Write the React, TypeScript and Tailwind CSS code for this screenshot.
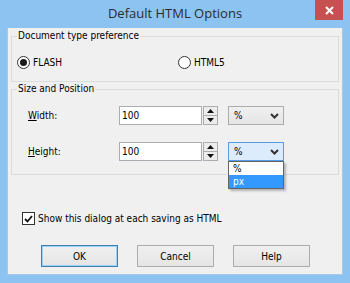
import React from "react";

const font = { fontFamily: '"DejaVu Sans Condensed", "Liberation Sans", Arial, sans-serif' };

function Radio({ checked, label }: { checked?: boolean; label: string }) {
  return (
    <div className="flex items-center gap-[3px]">
      <div className="w-[13px] h-[13px] rounded-full border border-[#333] bg-white flex items-center justify-center">
        {checked && <div className="w-[7px] h-[7px] rounded-full bg-[#1a1a1a]" />}
      </div>
      <span>{label}</span>
    </div>
  );
}

function Chevron() {
  return (
    <svg width="9" height="6" viewBox="0 0 9 6">
      <path d="M1 1 L4.5 4.5 L8 1" stroke="#333" strokeWidth="2" fill="none" />
    </svg>
  );
}

function Spin() {
  return (
    <div className="flex flex-col w-[15px] h-[19px] ml-[1px]">
      <div className="flex-1 border border-[#adadad] bg-[#ececec] flex items-center justify-center">
        <svg width="7" height="4" viewBox="0 0 7 4"><path d="M0 4 L3.5 0 L7 4 Z" fill="#111" /></svg>
      </div>
      <div className="flex-1 border border-t-0 border-[#adadad] bg-[#ececec] flex items-center justify-center">
        <svg width="7" height="4" viewBox="0 0 7 4"><path d="M0 0 L3.5 4 L7 0 Z" fill="#111" /></svg>
      </div>
    </div>
  );
}

function Combo({ focused }: { focused?: boolean }) {
  return (
    <div
      className={
        "w-[56px] h-[19px] border flex items-center justify-between pl-[5px] pr-[4px] " +
        (focused ? "border-[#569de5] bg-[#dcecfc]" : "border-[#acacac] bg-gradient-to-b from-[#f0f0f0] to-[#e5e5e5]")
      }
    >
      <span>%</span>
      <Chevron />
    </div>
  );
}

function Row({ u, rest, focused, dropdown }: { u: string; rest: string; focused?: boolean; dropdown?: boolean }) {
  return (
    <div className="flex items-center h-[19px]">
      <div className="w-[107px] pl-[16px]">
        <span className="underline">{u}</span>
        {rest}
      </div>
      <div className="w-[83px] h-[19px] border border-[#abadb3] bg-white flex items-center pl-[2px]">100</div>
      <Spin />
      <div className="ml-[10px] relative">
        <Combo focused={focused} />
        {dropdown && (
          <div className="absolute left-0 top-[19px] w-[56px] border border-[#646464] bg-white shadow-[2px_2px_2px_rgba(0,0,0,0.25)] flex flex-col">
            <div className="h-[13px] pl-[4px] leading-[13px]">%</div>
            <div className="h-[13px] pl-[4px] leading-[13px] bg-[#3399ff] text-white">px</div>
          </div>
        )}
      </div>
    </div>
  );
}

function Group({ title, className, children }: { title: string; className?: string; children: React.ReactNode }) {
  return (
    <div className={"relative mx-[3px] border border-[#dcdcdc] " + (className || "")}>
      <div className="absolute -top-[8px] left-[5px] px-[1px] bg-[#f0f0f0] leading-[14px]">{title}</div>
      {children}
    </div>
  );
}

function Button({ label, def }: { label: string; def?: boolean }) {
  return (
    <div
      className={
        "w-[77px] h-[22px] flex items-center justify-center border bg-gradient-to-b from-[#f0f0f0] to-[#e5e5e5] " +
        (def ? "border-[#3c7fb1] shadow-[inset_0_0_0_1px_#9fd0f7]" : "border-[#acacac]")
      }
    >
      {label}
    </div>
  );
}

export default function App() {
  return (
    <div className="w-[350px] h-[283px] bg-[#8cc3f1] flex flex-col px-[7px] pb-[8px] text-[10px] text-black" style={font}>
      <div className="h-[28px] relative flex items-center justify-center">
        <span className="text-[13px] text-[#2b2b2b] -mt-[1px]" style={{ fontFamily: '"Open Sans", "Noto Sans", sans-serif' }}>
          Default HTML Options
        </span>
        <div className="absolute right-0 top-0 w-[28px] h-[20px] bg-[#c75050] flex items-center justify-center">
          <svg width="9" height="9" viewBox="0 0 9 9">
            <path d="M1 1 L8 8 M8 1 L1 8" stroke="white" strokeWidth="2" />
          </svg>
        </div>
      </div>
      <div className="flex-1 bg-[#f0f0f0] border border-[#a9c8e4] border-t-0 flex flex-col">
        <Group title="Document type preference" className="mt-[8px] h-[46px]">
          <div className="flex items-center pt-[18px] pl-[5px]">
            <div className="w-[161px]">
              <Radio checked label="FLASH" />
            </div>
            <Radio label="HTML5" />
          </div>
        </Group>
        <Group title="Size and Position" className="mt-[7px] h-[86px]">
          <div className="flex flex-col pt-[16px] gap-[17px]">
            <Row u="W" rest="idth:" />
            <Row u="H" rest="eight:" focused dropdown />
          </div>
        </Group>
        <div className="flex items-center gap-[3px] mt-[36px] pl-[14px]">
          <div className="w-[13px] h-[13px] border border-[#333] bg-white flex items-center justify-center">
            <svg width="9" height="8" viewBox="0 0 9 8">
              <path d="M1 4 L3.5 6.5 L8 1" stroke="#111" strokeWidth="1.8" fill="none" />
            </svg>
          </div>
          <span>Show this dialog at each saving as HTML</span>
        </div>
        <div className="flex gap-[19px] mt-[19px] pl-[33px]">
          <Button label="OK" def />
          <Button label="Cancel" />
          <Button label="Help" />
        </div>
      </div>
    </div>
  );
}
